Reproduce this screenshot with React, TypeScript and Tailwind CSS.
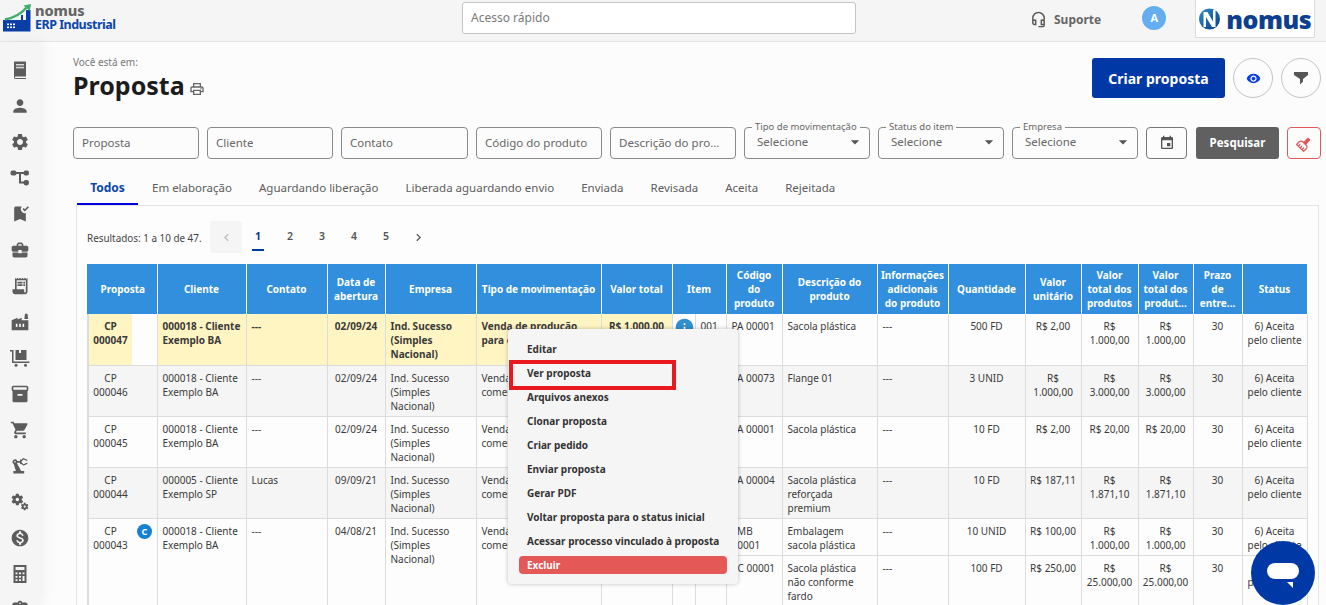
import React from "react";
import {
  MdPerson, MdSettings, MdBookmarkAdded, MdBusinessCenter, MdReceiptLong, MdFactory,
  MdInventory2, MdShoppingCart, MdPrecisionManufacturing, MdMiscellaneousServices, MdMonetizationOn,
  MdAssignment, MdOutlineHeadsetMic, MdOutlinePrint, MdVisibility, MdArrowDropDown, MdEvent,
  MdCleaningServices, MdChevronLeft, MdChevronRight, MdInfo,
} from "react-icons/md";

type IconProps = { className?: string };

function BookIcon({ className }: IconProps) {
  return (
    <svg viewBox="0 0 20 20" className={className} fill="currentColor">
      <path d="M4 1.5h12v15H5.2a1 1 0 0 0 0 1.4H16V19H5a1.5 1.5 0 0 1-1-1.4Z" />
      <rect x="6" y="4" width="8" height="1.5" fill="#d8d8d8" />
      <rect x="6" y="6.8" width="8" height="1.5" fill="#d8d8d8" />
    </svg>
  );
}

function TreeIcon({ className }: IconProps) {
  return (
    <svg viewBox="0 0 20 20" className={className} fill="currentColor">
      <path d="M3 5h13M10 5v9.5h6" stroke="currentColor" strokeWidth="2" fill="none" />
      <rect x="0.5" y="2.5" width="6" height="5" rx="2" />
      <rect x="13.5" y="2.5" width="5.5" height="5" rx="2" />
      <rect x="13.5" y="12" width="5.5" height="5.5" rx="2.4" />
    </svg>
  );
}

function HandcartIcon({ className }: IconProps) {
  return (
    <svg viewBox="0 0 20 20" className={className} fill="currentColor">
      <path d="M0 2h3.5v11.5H19.5v1.5H2V3.5H0Z" />
      <path d="M5.5 2H9v3h2V2h5.5v10h-11Z" />
      <circle cx="6" cy="17.3" r="1.5" />
      <circle cx="15.5" cy="17.3" r="1.5" />
    </svg>
  );
}

function CalculatorIcon({ className }: IconProps) {
  return (
    <svg viewBox="0 0 20 20" className={className} fill="currentColor">
      <path fillRule="evenodd" d="M3.5 1h13v18h-13ZM5.5 3v3h9V3ZM5.5 8.5v1.8h2v-1.8ZM9 8.5v1.8h2v-1.8ZM12.5 8.5v1.8h2v-1.8ZM5.5 12v1.8h2V12ZM9 12v1.8h2V12ZM12.5 12v5h2v-5ZM5.5 15.2V17h2v-1.8ZM9 15.2V17h2v-1.8Z" />
    </svg>
  );
}

const sideIcons = [
  BookIcon, MdPerson, MdSettings, TreeIcon, MdBookmarkAdded, MdBusinessCenter, MdReceiptLong, MdFactory,
  HandcartIcon, MdInventory2, MdShoppingCart, MdPrecisionManufacturing, MdMiscellaneousServices, MdMonetizationOn,
  CalculatorIcon, MdAssignment,
];

const widths = [44, 25, 89, 81, 58, 91, 125, 71, 23, 31, 56, 95, 71, 77, 56, 57, 55, 49, 65];

type Row = {
  id: string; cliente: string; contato: string; data: string; tipo: string; total: string; item: string; codigo: string;
  desc: string; qtd: string; unit: string; t1: string; t2: string;
};

const rows: Row[] = [
  { id: "000047", cliente: "000018 - Cliente Exemplo BA", contato: "---", data: "02/09/24", tipo: "Venda de produção para consumo", total: "R$ 1.000,00", item: "001", codigo: "PA 00001", desc: "Sacola plástica", qtd: "500 FD", unit: "R$ 2,00", t1: "R$ 1.000,00", t2: "R$ 1.000,00" },
  { id: "000046", cliente: "000018 - Cliente Exemplo BA", contato: "---", data: "02/09/24", tipo: "Venda de produto comercializado", total: "R$ 3.000,00", item: "001", codigo: "PA 00073", desc: "Flange 01", qtd: "3 UNID", unit: "R$ 1.000,00", t1: "R$ 3.000,00", t2: "R$ 3.000,00" },
  { id: "000045", cliente: "000018 - Cliente Exemplo BA", contato: "---", data: "02/09/24", tipo: "Venda de produto comercializado", total: "R$ 20,00", item: "001", codigo: "PA 00001", desc: "Sacola plástica", qtd: "10 FD", unit: "R$ 2,00", t1: "R$ 20,00", t2: "R$ 20,00" },
  { id: "000044", cliente: "000005 - Cliente Exemplo SP", contato: "Lucas", data: "09/09/21", tipo: "Venda de produto comercializado", total: "R$ 1.871,10", item: "001", codigo: "PA 00004", desc: "Sacola plástica reforçada premium", qtd: "10 FD", unit: "R$ 187,11", t1: "R$ 1.871,10", t2: "R$ 1.871,10" },
];

const menu = ["Editar", "Ver proposta", "Arquivos anexos", "Clonar proposta", "Criar pedido", "Enviar proposta", "Gerar PDF", "Voltar proposta para o status inicial", "Acessar processo vinculado à proposta"];
const tabs = ["Em elaboração", "Aguardando liberação", "Liberada aguardando envio", "Enviada", "Revisada", "Aceita", "Rejeitada"];

const th = "border-r border-white bg-[#328fde] px-[2px] text-center align-middle text-[10px] font-bold leading-[14px] text-white";
const base = "border-b border-r border-[#dcdcdc] pt-[5px] pb-[3px] align-top text-[10px] leading-[14px] text-[#3a3a3a]";
const td = `${base} pl-[5px] pr-[4px]`;
const tc = `${base} px-[4px] text-center`;

function Field({ label, wide }: { label: string; wide?: boolean }) {
  return (
    <div className={`flex h-8 shrink-0 items-center rounded-[4px] border border-[#8a8a8a] pb-px pl-[8px] pr-[12px] text-[11.5px] text-[#666] ${wide ? "w-[127px]" : "w-[126px]"}`}>
      <span className="truncate">{label}</span>
    </div>
  );
}

function SelectField({ label }: { label: string }) {
  return (
    <div className="relative flex h-8 w-[126px] shrink-0 items-center justify-between rounded-[4px] border border-[#8a8a8a] pb-[2px] pl-[12px] pr-[4px] text-[11.5px] text-[#666]">
      <span>Selecione</span>
      <MdArrowDropDown className="text-[20px] text-[#555]" />
      <span className="absolute -top-[7px] left-[7px] bg-[#fcfcfc] px-[3px] text-[9.5px] leading-[12px] text-[#666]">{label}</span>
    </div>
  );
}

export default function App() {
  return (
    <div className="relative h-[605px] w-[1326px] overflow-hidden bg-[#fcfcfc] font-['Open_Sans',sans-serif]">
      <header className="flex h-[42px] items-start border-b border-[#e4e4e4] bg-[#f5f5f5]">
        <div className="flex h-[41px] w-[462px] items-start pl-[3px] pt-[4px]">
          <svg width="28" height="28" viewBox="0 0 28 28">
            <path d="M0 16 H18 V11 H20 V16 H23 V6 H27.5 V27.5 H0Z" fill="#0a3fa8" />
            <path d="M2 15.5 C11 14 18 10 24 3" stroke="#3fae6a" strokeWidth="2.4" fill="none" />
            <path d="M20.5 1.5 L28 0 L26.8 7Z" fill="#3fae6a" />
            <g fill="#fff">
              <rect x="4" y="19.5" width="2" height="1.6" /><rect x="7" y="19.5" width="2" height="1.6" /><rect x="10" y="19.5" width="2" height="1.6" />
              <rect x="4" y="22.5" width="2" height="1.6" /><rect x="7" y="22.5" width="2" height="1.6" /><rect x="10" y="22.5" width="2" height="1.6" />
            </g>
          </svg>
          <div className="ml-[4px] flex flex-col">
            <span className="font-['Inter',sans-serif] text-[14.5px] font-extrabold leading-[13px] tracking-[-0.1px] text-[#666]">nomus</span>
            <span className="text-[12.5px] font-bold leading-[15px] tracking-[-0.5px] text-[#0a46a8]">ERP Industrial</span>
          </div>
        </div>
        <div className="mt-[2px] flex h-8 w-[394px] items-center rounded-[3px] border border-[#c4c4c4] bg-white px-[8px] text-[12px] text-[#7a7a7a]">Acesso rápido</div>
        <div className="ml-[174px] mt-[11px] flex items-center">
          <MdOutlineHeadsetMic className="text-[17px] text-[#555]" />
          <span className="ml-[7px] text-[12px] font-bold leading-[14px] text-[#666]">Suporte</span>
        </div>
        <div className="ml-[41px] mt-[6px] flex h-6 w-6 items-center justify-center rounded-full bg-[#64aef0] text-[11px] font-bold text-white">A</div>
        <div className="ml-[29px] flex h-[38px] w-[120px] items-center justify-center border border-t-0 border-[#dcdcdc] bg-white">
          <svg width="21" height="22" viewBox="0 0 21 22">
            <defs>
              <linearGradient id="nl" x1="0" y1="0" x2="1" y2="1">
                <stop offset="0" stopColor="#2a8fc8" />
                <stop offset="1" stopColor="#0b3b8c" />
              </linearGradient>
            </defs>
            <circle cx="10.5" cy="11" r="10.5" fill="url(#nl)" />
            <path d="M4.5 4 H8.5 L14 13.5 V2 H16.5 V19 H13 L7 9 V19 H4.5Z" fill="#fff" />
          </svg>
          <span className="ml-[6px] font-['Inter',sans-serif] text-[25px] font-black leading-[24px] tracking-[-0.5px] text-[#0e3f8f]">nomus</span>
        </div>
      </header>

      <div className="flex h-[563px]">
        <aside className="flex w-[40px] shrink-0 flex-col items-center gap-[16px] bg-[#f5f5f5] pt-[18px] shadow-[4px_0_14px_rgba(0,0,0,0.05)]">
          {sideIcons.map((Icon, i) => (
            <Icon key={i} className="h-5 w-5 shrink-0 text-[#5c5c5c]" />
          ))}
        </aside>

        <main className="min-w-0 flex-1 pl-[33px] pr-[5px]">
          <div className="flex h-[85px] items-start justify-between pt-[13px]">
            <div>
              <div className="text-[10px] leading-[14px] text-[#777]">Você está em:</div>
              <div className="flex items-center">
                <h1 className="text-[25px] font-bold leading-[33px] text-[#1c1c1c]">Proposta</h1>
                <MdOutlinePrint className="ml-[4px] mt-[6px] text-[16px] text-[#666]" />
              </div>
            </div>
            <div className="mt-[3px] flex items-center gap-2">
              <button className="h-10 w-[133px] rounded-[3px] bg-[#0039a6] text-[14px] font-bold text-white">Criar proposta</button>
              <span className="flex h-10 w-10 items-center justify-center rounded-full border border-[#c4c4c4]"><MdVisibility className="text-[15px] text-[#0a3fe0]" /></span>
              <span className="flex h-10 w-10 items-center justify-center rounded-full border border-[#c4c4c4]">
                <svg width="14" height="14" viewBox="0 0 14 14" fill="#555"><path d="M0 1h14v3L9 8v2.5L6 13.5V8L0 4Z" /></svg>
              </span>
            </div>
          </div>

          <div className="flex items-center gap-2">
            <Field label="Proposta" />
            <Field label="Cliente" />
            <Field label="Contato" wide />
            <Field label="Código do produto" />
            <Field label="Descrição do produto" />
            <SelectField label="Tipo de movimentação" />
            <SelectField label="Status do item" />
            <SelectField label="Empresa" />
            <span className="flex h-8 w-[41px] shrink-0 items-center justify-center rounded-[4px] border border-[#777]"><MdEvent className="text-[16px] text-[#555]" /></span>
            <button className="ml-px h-8 w-[83px] shrink-0 rounded-[3px] bg-[#606060] text-[11.5px] font-bold text-white">Pesquisar</button>
            <span className="flex h-8 w-[34px] shrink-0 items-center justify-center rounded-[4px] border border-[#e05a5a]"><MdCleaningServices className="rotate-45 text-[15px] text-[#e05a5a]" /></span>
          </div>

          <nav className="ml-[4px] mr-[3px] mt-[14px] flex h-[32px] items-start text-[11.5px] leading-[29px] text-[#5c5c5c]">
            <span className="h-[32px] w-[61px] border-b-2 border-[#0000e0] text-center text-[12px] font-bold text-[#0a46a8]">Todos</span>
            <div className="flex gap-[27px] pl-[14px]">
              {tabs.map((t) => (<span key={t}>{t}</span>))}
            </div>
          </nav>

          <section className="ml-[3px] h-[420px] w-[1243px] overflow-hidden border-l border-r border-t border-[#e4e4e4] bg-[#fdfdfd] pl-[10px]">
            <div className="flex h-[58px] items-start pt-[15px]">
              <span className="w-[123px] pt-[10px] text-[9.9px] leading-[14px] text-[#444]">Resultados: 1 a 10 de 47.</span>
              <span className="flex h-8 w-8 items-center justify-center rounded-[3px] bg-[#f5f5f5] text-[#bbb]"><MdChevronLeft className="text-[15px]" /></span>
              {["1", "2", "3", "4", "5"].map((n, i) => (
                <span key={n} className={i === 0 ? "relative flex h-8 w-8 items-center justify-center text-[10.5px] font-bold text-[#0a3a90]" : "flex h-8 w-8 items-center justify-center text-[10.5px] font-semibold text-[#555]"}>
                  {n}
                  {i === 0 && <span className="absolute bottom-[2px] left-[10px] h-[2px] w-3 bg-[#0039a6]" />}
                </span>
              ))}
              <span className="flex h-8 w-8 items-center justify-center text-[#555]"><MdChevronRight className="text-[15px]" /></span>
            </div>

            <table className="w-[1219px] table-fixed border-collapse">
              <colgroup>
                {widths.map((w, i) => (<col key={i} style={{ width: w }} />))}
              </colgroup>
              <thead>
                <tr className="h-[50px]">
                  <th colSpan={2} className={`${th} border-l-2 border-l-[#328fde]`}>Proposta</th>
                  <th className={th}>Cliente</th>
                  <th className={th}>Contato</th>
                  <th className={th}>Data de abertura</th>
                  <th className={th}>Empresa</th>
                  <th className={th}>Tipo de movimentação</th>
                  <th className={th}>Valor total</th>
                  <th colSpan={2} className={th}>Item</th>
                  <th className={th}>Código<br />do<br />produto</th>
                  <th className={th}>Descrição do produto</th>
                  <th className={th}>Informações<br />adicionais<br />do produto</th>
                  <th className={th}>Quantidade</th>
                  <th className={th}>Valor unitário</th>
                  <th className={th}>Valor total dos produtos</th>
                  <th className={th}>Valor total dos produt...</th>
                  <th className={th}>Prazo<br />de<br />entre...</th>
                  <th className={th}>Status</th>
                </tr>
              </thead>
              <tbody>
                {rows.map((r, i) => {
                  const first = i === 0;
                  const bg = first ? "bg-[#fff5c2] font-bold" : i % 2 === 1 ? "bg-[#f5f5f5]" : "bg-[#fdfdfd]";
                  const rest = first ? "bg-[#fdfdfd]" : i % 2 === 1 ? "bg-[#f5f5f5]" : "bg-[#fdfdfd]";
                  return (
                    <tr key={r.id} className="h-[51px]">
                      <td className={`${tc} ${bg} border-l-2 border-r-0`}>CP {r.id}</td>
                      <td className={`${base} ${rest}`}></td>
                      <td className={`${td} ${bg}`}>{r.cliente}</td>
                      <td className={`${td} ${bg}`}>{r.contato}</td>
                      <td className={`${tc} ${bg}`}>{r.data}</td>
                      <td className={`${td} ${bg}`}>Ind. Sucesso (Simples Nacional)</td>
                      <td className={`${td} ${bg}`}>{r.tipo}</td>
                      <td className={`${tc} ${bg}`}>{r.total}</td>
                      <td className={`${base} ${rest}`}>{first && <MdInfo className="-mt-[2px] ml-px text-[21px] text-[#2f8fd0]" />}</td>
                      <td className={`${td} ${rest}`}>{r.item}</td>
                      <td className={`${td} ${rest}`}>{r.codigo}</td>
                      <td className={`${td} ${rest}`}>{r.desc}</td>
                      <td className={`${td} ${rest}`}>---</td>
                      <td className={`${tc} ${rest}`}>{r.qtd}</td>
                      <td className={`${tc} ${rest}`}>{r.unit}</td>
                      <td className={`${tc} ${rest}`}>{r.t1}</td>
                      <td className={`${tc} ${rest}`}>{r.t2}</td>
                      <td className={`${tc} ${rest}`}>30</td>
                      <td className={`${tc} ${rest}`}>6) Aceita pelo cliente</td>
                    </tr>
                  );
                })}
                <tr className="h-[37px]">
                  <td rowSpan={2} className={`${tc} border-l-2 border-r-0`}>CP 000043</td>
                  <td rowSpan={2} className={base}>
                    <span className="ml-[5px] flex h-[15px] w-[15px] items-center justify-center rounded-full bg-[#1681d0] text-[9px] font-bold leading-none text-white">C</span>
                  </td>
                  <td rowSpan={2} className={td}>000018 - Cliente Exemplo BA</td>
                  <td rowSpan={2} className={td}>---</td>
                  <td rowSpan={2} className={tc}>04/08/21</td>
                  <td rowSpan={2} className={td}>Ind. Sucesso (Simples Nacional)</td>
                  <td rowSpan={2} className={td}>Venda de produto comercializado</td>
                  <td rowSpan={2} className={tc}>R$ 26.000,00</td>
                  <td className={base}></td>
                  <td className={td}>001</td>
                  <td className={td}>EMB 00001</td>
                  <td className={td}>Embalagem sacola plástica</td>
                  <td className={td}>---</td>
                  <td className={tc}>10 UNID</td>
                  <td className={tc}>R$ 100,00</td>
                  <td className={tc}>R$ 1.000,00</td>
                  <td className={tc}>R$ 1.000,00</td>
                  <td className={tc}>30</td>
                  <td className={tc}>6) Aceita pelo cliente</td>
                </tr>
                <tr className="h-[51px]">
                  <td className={base}></td>
                  <td className={td}>002</td>
                  <td className={td}>PC 00001</td>
                  <td className={td}>Sacola plástica não conforme fardo</td>
                  <td className={td}>---</td>
                  <td className={tc}>100 FD</td>
                  <td className={tc}>R$ 250,00</td>
                  <td className={tc}>R$ 25.000,00</td>
                  <td className={tc}>R$ 25.000,00</td>
                  <td className={tc}>30</td>
                  <td className={tc}>6) Aceita pelo cliente</td>
                </tr>
              </tbody>
            </table>
          </section>
        </main>
      </div>

      <div className="absolute left-[508px] top-[329px] flex h-[255px] w-[230px] flex-col rounded-[4px] bg-[#f5f5f5] px-[11px] pt-[8px] shadow-[0_0_4px_rgba(0,0,0,0.25)]">
        {menu.map((m) => (
          <div key={m} className="h-6 pl-[8px] text-[10px] font-bold leading-[24px] text-[#333]">{m}</div>
        ))}
        <div className="mt-[3px] h-[18px] rounded-[4px] bg-[#e55858] pl-[8px] text-[10px] font-bold leading-[18px] text-white">Excluir</div>
      </div>
      <div className="absolute left-[509px] top-[360px] h-[30px] w-[167px] border-[4px] border-[#e8191f]" />

      <div className="absolute left-[1251px] top-[541px] flex h-16 w-16 items-center justify-center rounded-full bg-[#0039a6]">
        <svg width="34" height="30" viewBox="0 0 34 30">
          <rect x="1" y="5" width="32" height="16" rx="8" fill="#fff" />
          <path d="M21 24 L27 24 L27 30Z" fill="#fff" />
        </svg>
      </div>
    </div>
  );
}
